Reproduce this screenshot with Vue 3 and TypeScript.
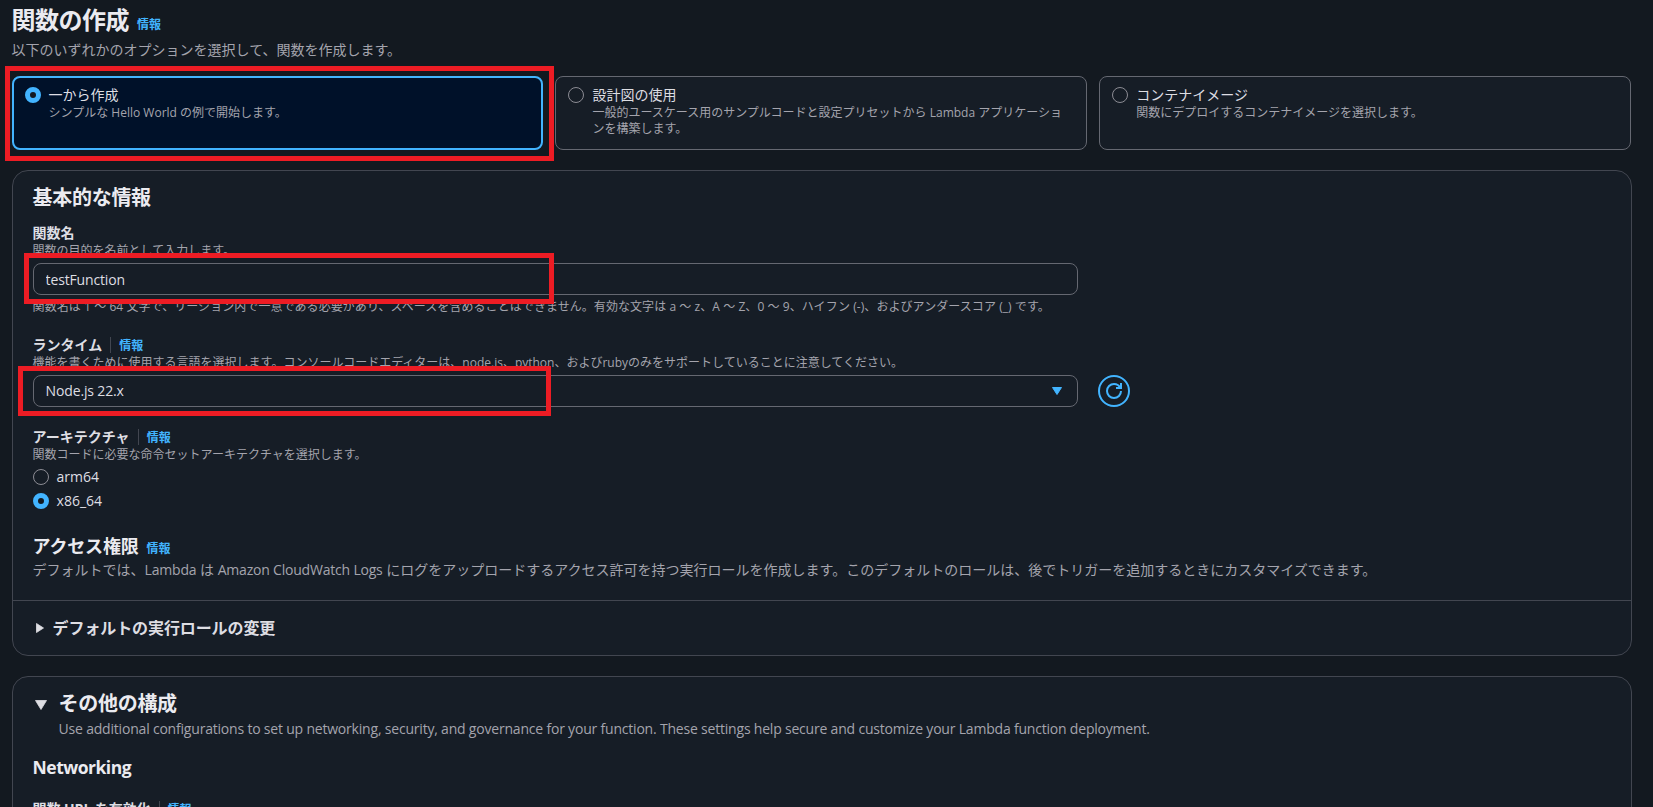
<script setup lang="ts">
import { ref } from 'vue'

interface Option {
  value: string
  label: string
  description?: string
}

const creationOptions: Option[] = [
  { value: 'scratch', label: '一から作成', description: 'シンプルな Hello World の例で開始します。' },
  {
    value: 'blueprint',
    label: '設計図の使用',
    description:
      '一般的ユースケース用のサンプルコードと設定プリセットから Lambda アプリケーションを構築します。',
  },
  {
    value: 'container',
    label: 'コンテナイメージ',
    description: '関数にデプロイするコンテナイメージを選択します。',
  },
]

const architectures: Option[] = [
  { value: 'arm64', label: 'arm64' },
  { value: 'x86_64', label: 'x86_64' },
]

const creation = ref('scratch')
const architecture = ref('x86_64')
const functionName = ref('testFunction')
const runtime = ref('Node.js 22.x')
</script>

<template>
  <main class="page">
    <header class="page-header">
      <h1>関数の作成</h1>
      <a class="info">情報</a>
    </header>
    <p class="page-description">以下のいずれかのオプションを選択して、関数を作成します。</p>

    <div class="tiles">
      <div
        v-for="option in creationOptions"
        :key="option.value"
        class="tile"
        :class="{ selected: creation === option.value }"
        @click="creation = option.value"
      >
        <span class="radio" :class="{ checked: creation === option.value }" />
        <div class="tile-text">
          <div class="tile-label">{{ option.label }}</div>
          <div class="hint">{{ option.description }}</div>
        </div>
      </div>
    </div>

    <section class="panel basic">
      <div class="panel-body">
        <h2>基本的な情報</h2>

        <div class="field">
          <div class="field-label">関数名</div>
          <div class="hint">関数の目的を名前として入力します。</div>
          <input v-model="functionName" class="control" type="text" spellcheck="false" />
          <div class="hint constraint">
            関数名は 1 ～ 64 文字で、リージョン内で一意である必要があり、スペースを含めることはできません。有効な文字は a ～ z、A ～ Z、0 ～ 9、ハイフン (-)、およびアンダースコア (_) です。
          </div>
        </div>

        <div class="field runtime">
          <div class="field-label">ランタイム<span class="separator" /><a class="info">情報</a></div>
          <div class="hint">
            機能を書くために使用する言語を選択します。コンソールコードエディターは、node.js、python、およびrubyのみをサポートしていることに注意してください。
          </div>
          <div class="control-row">
            <div class="control select">
              <span>{{ runtime }}</span>
              <svg class="select-caret" viewBox="0 0 16 16">
                <path d="M3.5 4.5h9L8 11.5z" />
              </svg>
            </div>
            <button class="refresh" type="button" aria-label="refresh">
              <svg viewBox="0 0 16 16">
                <path d="M15 8c0 3.87-3.13 7-7 7s-7-3.13-7-7 3.13-7 7-7c2.79 0 5.2 1.63 6.33 4" />
                <path d="M10 5h5V0" />
              </svg>
            </button>
          </div>
        </div>

        <div class="field architecture">
          <div class="field-label">アーキテクチャ<span class="separator" /><a class="info">情報</a></div>
          <div class="hint">関数コードに必要な命令セットアーキテクチャを選択します。</div>
          <div class="radio-group">
            <div
              v-for="option in architectures"
              :key="option.value"
              class="radio-row"
              @click="architecture = option.value"
            >
              <span class="radio" :class="{ checked: architecture === option.value }" />
              <span>{{ option.label }}</span>
            </div>
          </div>
        </div>

        <div class="permissions">
          <h3>アクセス権限</h3>
          <a class="info">情報</a>
        </div>
        <p class="section-description">
          デフォルトでは、<span class="latin">Lambda</span> は <span class="latin">Amazon CloudWatch Logs</span> にログをアップロードするアクセス許可を持つ実行ロールを作成します。このデフォルトのロールは、後でトリガーを追加するときにカスタマイズできます。
        </p>
      </div>

      <div class="role-toggle">
        <svg class="caret" viewBox="0 0 16 16">
          <path d="M3.5 3.5v9l7-4.5z" />
        </svg>
        <span>デフォルトの実行ロールの変更</span>
      </div>
    </section>

    <section class="panel additional">
      <div class="additional-header">
        <svg class="caret-large" viewBox="0 0 16 16">
          <path d="M2.5 3.5h11L8 12.5z" />
        </svg>
        <div>
          <h2>その他の構成</h2>
          <p class="section-description latin">
            Use additional configurations to set up networking, security, and governance for your function. These
            settings help secure and customize your Lambda function deployment.
          </p>
        </div>
      </div>
      <h3 class="networking">Networking</h3>
      <div class="field-label url">関数 URL を有効化<span class="separator" /><a class="info">情報</a></div>
    </section>

    <div class="highlight highlight-scratch" />
    <div class="highlight highlight-name" />
    <div class="highlight highlight-runtime" />
  </main>
</template>

<style>
body {
  overflow: hidden;
  background: #131920;
}
</style>

<style scoped>
.page {
  position: relative;
  box-sizing: border-box;
  height: 807px;
  padding: 5px 21.4px 0 11.6px;
  overflow: hidden;
  background: #131920;
  color: #dedee3;
  font-family: 'Open Sans', 'Noto Sans CJK JP', sans-serif;
  font-size: 14px;
  line-height: 20px;
}

h1,
h2,
h3,
p {
  margin: 0;
}

h1,
h2,
h3 {
  color: #ebebf0;
  font-weight: 700;
}

h1 {
  font-size: 24px;
  line-height: 30px;
  letter-spacing: -0.5px;
}

h2 {
  font-size: 20px;
  line-height: 24px;
  letter-spacing: -0.3px;
}

h3 {
  font-size: 18px;
  line-height: 22px;
  letter-spacing: -0.2px;
}

.page-header,
.permissions {
  display: flex;
  align-items: baseline;
  gap: 8px;
}

.info {
  color: #42b4ff;
  font-size: 12px;
  font-weight: 700;
  line-height: 16px;
}

.page-description {
  padding-top: 5px;
  color: #a4a4ad;
}

.tiles {
  display: grid;
  grid-template-columns: repeat(3, 1fr);
  gap: 12px;
  margin: 16px 0.6px 0 0;
}

.tile {
  display: flex;
  gap: 8px;
  box-sizing: border-box;
  height: 74px;
  padding: 8px 20px 8px 12px;
  border: 1px solid #656871;
  border-radius: 8px;
  background: #161d26;
}

.tile.selected {
  padding: 7px 19px 7px 11px;
  border: 2px solid #42b4ff;
  background: #001129;
}

.tile-text {
  flex: 1;
}

.hint {
  color: #a4a4ad;
  font-size: 12px;
  line-height: 16px;
}

.latin {
  letter-spacing: -0.2px;
}

.radio {
  flex: none;
  box-sizing: border-box;
  width: 16px;
  height: 16px;
  margin-top: 2px;
  border: 1px solid #8c8c94;
  border-radius: 50%;
}

.radio.checked {
  border: 5px solid #42b4ff;
  background: #131920;
}

.panel {
  box-sizing: border-box;
  border: 1px solid #424650;
  border-radius: 16px;
  background: #161d26;
}

.basic {
  height: 486px;
  margin-top: 20px;
}

.panel-body {
  height: 430px;
  padding: 15px 20px 0;
  box-sizing: border-box;
  border-bottom: 1px solid #424650;
}

.field {
  margin-top: 13px;
}

.field-label {
  display: flex;
  align-items: center;
  font-weight: 700;
}

.field-label .info {
  padding-top: 2px;
}

.separator {
  width: 1px;
  height: 16px;
  margin: 0 8px;
  background: #424650;
}

.control {
  display: block;
  box-sizing: border-box;
  width: 1045px;
  height: 32px;
  margin-top: 4px;
  padding: 4px 12px;
  border: 1px solid #656871;
  border-radius: 8px;
  outline: none;
  background: #161d26;
  color: #dedee3;
  font: inherit;
  letter-spacing: -0.15px;
}

.constraint {
  padding-top: 4px;
  letter-spacing: 0.065px;
}

.runtime {
  margin-top: 20px;
}

.control-row {
  display: flex;
  gap: 20px;
}

.select {
  display: flex;
  align-items: center;
  justify-content: space-between;
}

.select-caret {
  width: 16px;
  height: 16px;
  fill: #42b4ff;
  stroke: #42b4ff;
  stroke-linejoin: round;
}

.refresh {
  display: grid;
  place-items: center;
  box-sizing: border-box;
  width: 32px;
  height: 32px;
  margin-top: 4px;
  padding: 0;
  border: 2px solid #42b4ff;
  border-radius: 50%;
  background: none;
}

.refresh svg {
  width: 16px;
  height: 16px;
  overflow: visible;
  fill: none;
  stroke: #42b4ff;
  stroke-width: 2;
}

.architecture {
  margin-top: 20px;
}

.radio-group {
  display: grid;
  gap: 4px;
  margin-top: 4px;
}

.radio-row {
  display: flex;
  gap: 8px;
}

.permissions {
  margin-top: 24px;
}

.section-description {
  padding-top: 3px;
  color: #a4a4ad;
}

.role-toggle {
  display: flex;
  align-items: center;
  gap: 4px;
  height: 54px;
  padding-left: 20px;
  font-size: 16px;
  font-weight: 700;
  letter-spacing: -0.1px;
}

.caret,
.caret-large {
  width: 16px;
  height: 16px;
  fill: #dedee3;
  stroke: #dedee3;
  stroke-width: 0.8;
  stroke-linejoin: round;
}

.additional {
  height: 400px;
  margin-top: 20px;
  padding: 15px 20px 0;
}

.additional-header {
  display: flex;
  gap: 10px;
}

.caret-large {
  margin-top: 5px;
}

.networking {
  margin-top: 17px;
  font-size: 17.5px;
  letter-spacing: -0.5px;
}

.url {
  margin-top: 21px;
  letter-spacing: -0.1px;
}

/* Walkthrough markers drawn over the form */
.highlight {
  position: absolute;
  box-sizing: border-box;
  border: 5px solid #ed1c24;
  pointer-events: none;
}

.highlight-scratch {
  top: 66px;
  left: 5px;
  width: 549px;
  height: 95px;
}

.highlight-name {
  top: 253px;
  left: 24px;
  width: 530px;
  height: 51px;
}

.highlight-runtime {
  top: 366px;
  left: 18px;
  width: 533px;
  height: 50px;
}
</style>
